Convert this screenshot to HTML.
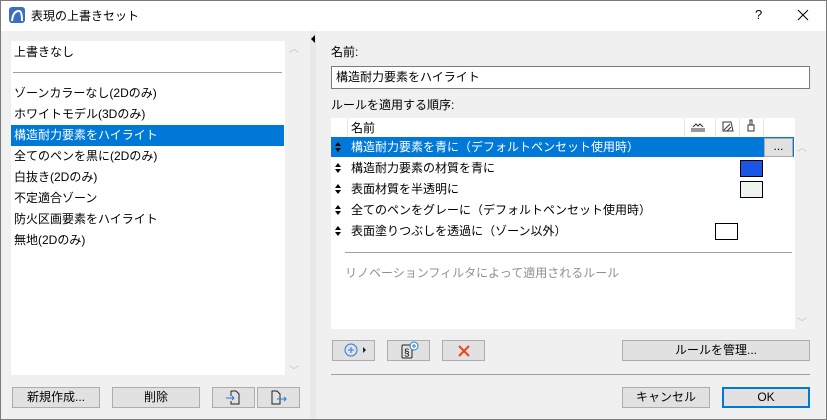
<!DOCTYPE html>
<html><head><meta charset="utf-8"><style>
*{box-sizing:border-box;margin:0;padding:0}
body{width:827px;height:420px;overflow:hidden;background:#f0f0f0;font-family:"Liberation Sans","Noto Sans CJK JP",sans-serif;font-size:12px;color:#000;position:relative}
.a{position:absolute}
.btn{position:absolute;background:#e1e1e1;border:1px solid #adadad;text-align:center;line-height:18px;height:21px}
.t{position:absolute;white-space:nowrap;line-height:16px}
.ar{position:absolute;left:335px}
</style></head><body>
<div class="a" style="left:0;top:0;width:827px;height:420px;border:1px solid #7a7a7a;z-index:9;pointer-events:none"></div>
<div class="a" style="left:0;top:0;width:827px;height:31px;background:#fff"></div>
<div class="a" style="left:9px;top:7px;width:16px;height:16px;background:#3c6fc0;border-radius:3px"><svg width="16" height="16"><path d="M3 14 Q4 4 10 4 Q13 4 13 14" fill="none" stroke="#fff" stroke-width="2"/></svg></div>
<div class="t" style="left:31px;top:8px">表現の上書きセット</div>
<div class="t" style="left:755px;top:7px;font-size:13px">?</div>
<svg class="a" style="left:797px;top:9px" width="12" height="12"><path d="M1 1L11 11M11 1L1 11" stroke="#000" stroke-width="1"/></svg>

<div class="a" style="left:11px;top:41px;width:274px;height:334px;background:#fff"></div>
<div class="t" style="left:14px;top:44px">上書きなし</div>
<div class="a" style="left:13px;top:72px;width:269px;height:1px;background:#a0a0a0"></div>
<div class="t" style="left:14px;top:85px">ゾーンカラーなし(2Dのみ)</div>
<div class="t" style="left:14px;top:106px">ホワイトモデル(3Dのみ)</div>
<div class="a" style="left:11px;top:125px;width:273px;height:21px;background:#0078d7"></div>
<div class="t" style="left:14px;top:127px;color:#fff">構造耐力要素をハイライト</div>
<div class="t" style="left:14px;top:148px">全てのペンを黒に(2Dのみ)</div>
<div class="t" style="left:14px;top:169px">白抜き(2Dのみ)</div>
<div class="t" style="left:14px;top:190px">不定適合ゾーン</div>
<div class="t" style="left:14px;top:211px">防火区画要素をハイライト</div>
<div class="t" style="left:14px;top:232px">無地(2Dのみ)</div>
<div class="t" style="left:289px;top:42px;color:#c0c0c0;font-size:10px">︿</div>
<div class="t" style="left:289px;top:364px;color:#c0c0c0;font-size:10px">﹀</div>
<div class="btn" style="left:12px;top:387px;width:88px">新規作成...</div>
<div class="btn" style="left:112px;top:387px;width:88px">削除</div>
<div class="btn" style="left:212px;top:387px;width:43px"><svg width="20" height="18"><path d="M7 3h5l3 3v10H7v-3M7 8v-5" fill="none" stroke="#222"/><path d="M2 10h8M8 8l2 2-2 2" fill="none" stroke="#1e7be0"/></svg></div>
<div class="btn" style="left:257px;top:387px;width:43px"><svg width="22" height="18"><path d="M4 3h5l3 3v10H4z" fill="none" stroke="#222"/><path d="M9 11h9M16 9l2 2-2 2" fill="none" stroke="#1e7be0"/></svg></div>
<div class="a" style="left:310px;top:31px;width:6px;height:389px;background:#e8e8e8"></div>
<div class="a" style="left:311px;top:35px;width:0;height:0;border-top:4px solid transparent;border-bottom:4px solid transparent;border-right:4px solid #000"></div>

<div class="t" style="left:331px;top:44px">名前:</div>
<div class="a" style="left:331px;top:66px;width:479px;height:23px;background:#fff;border:1px solid #7a7a7a"></div>
<div class="t" style="left:336px;top:69px">構造耐力要素をハイライト</div>
<div class="t" style="left:331px;top:97px">ルールを適用する順序:</div>
<div class="a" style="left:331px;top:118px;width:464px;height:211px;background:#fff"></div>
<div class="a" style="left:347px;top:118px;width:1px;height:18px;background:#e5e5e5"></div>
<div class="a" style="left:684px;top:118px;width:1px;height:18px;background:#e5e5e5"></div>
<div class="a" style="left:715px;top:118px;width:1px;height:18px;background:#e5e5e5"></div>
<div class="a" style="left:739px;top:118px;width:1px;height:18px;background:#e5e5e5"></div>
<div class="a" style="left:763px;top:118px;width:1px;height:18px;background:#e5e5e5"></div>
<div class="t" style="left:351px;top:120px">名前</div>
<svg class="a" style="left:690px;top:121px" width="16" height="12"><path d="M1 10h14M1 8h14M3 6l3-3 2 2 2-2 3 3" fill="none" stroke="#333"/></svg>
<svg class="a" style="left:721px;top:120px" width="14" height="13"><path d="M2 11h10l-2-9H2zM3 10l6-6M6 11l4-4" fill="none" stroke="#333"/></svg>
<svg class="a" style="left:746px;top:119px" width="10" height="14"><path d="M4 1h2v5H4zM2 6h6v6H2z" fill="none" stroke="#333"/></svg>
<div class="a" style="left:331px;top:137px;width:463px;height:20px;background:#0078d7"></div>
<div class="btn" style="left:764px;top:138px;width:29px;height:19px;line-height:14px;background:#e1e1e1">...</div>
<svg class="ar" style="top:142px" width="6" height="10"><path d="M0 4L3 0L6 4zM0 6L3 10L6 6z" fill="#000"/></svg>
<div class="t" style="left:351px;top:139px;color:#fff">構造耐力要素を青に（デフォルトペンセット使用時）</div>
<svg class="ar" style="top:163px" width="6" height="10"><path d="M0 4L3 0L6 4zM0 6L3 10L6 6z" fill="#000"/></svg>
<div class="t" style="left:351px;top:160px">構造耐力要素の材質を青に</div>
<div class="a" style="left:740px;top:160px;width:23px;height:17px;background:#1a55e6;border:1px solid #000"></div>
<svg class="ar" style="top:184px" width="6" height="10"><path d="M0 4L3 0L6 4zM0 6L3 10L6 6z" fill="#000"/></svg>
<div class="t" style="left:351px;top:181px">表面材質を半透明に</div>
<div class="a" style="left:740px;top:181px;width:23px;height:17px;background:#eef4ef;border:1px solid #000"></div>
<svg class="ar" style="top:205px" width="6" height="10"><path d="M0 4L3 0L6 4zM0 6L3 10L6 6z" fill="#000"/></svg>
<div class="t" style="left:351px;top:202px">全てのペンをグレーに（デフォルトペンセット使用時）</div>
<svg class="ar" style="top:226px" width="6" height="10"><path d="M0 4L3 0L6 4zM0 6L3 10L6 6z" fill="#000"/></svg>
<div class="t" style="left:351px;top:223px">表面塗りつぶしを透過に（ゾーン以外）</div>
<div class="a" style="left:715px;top:223px;width:23px;height:17px;background:#fff;border:1px solid #000"></div>
<div class="a" style="left:345px;top:252px;width:447px;height:1px;background:#a0a0a0"></div>
<div class="t" style="left:345px;top:265px;color:#909090">リノベーションフィルタによって適用されるルール</div>
<div class="t" style="left:797px;top:141px;color:#c0c0c0;font-size:10px">︿</div>
<div class="t" style="left:797px;top:316px;color:#c0c0c0;font-size:10px">﹀</div>
<div class="btn" style="left:332px;top:340px;width:43px"><svg width="30" height="18"><circle cx="12" cy="9" r="6" fill="none" stroke="#1e7be0"/><path d="M12 6v6M9 9h6" stroke="#1e7be0"/><path d="M24 6l3 3-3 3z" fill="#222"/></svg></div>
<div class="btn" style="left:387px;top:340px;width:43px"><svg width="24" height="18"><rect x="5" y="4" width="10" height="13" rx="1" fill="none" stroke="#222"/><text x="7" y="15" font-size="10" font-family="Liberation Sans">§</text><circle cx="17" cy="5" r="4" fill="#fff" stroke="#1e7be0"/><path d="M17 3v4M15 5h4" stroke="#1e7be0"/></svg></div>
<div class="btn" style="left:442px;top:340px;width:43px"><svg width="14" height="14" style="margin-top:3px"><path d="M2 2L12 12M12 2L2 12" stroke="#f04020" stroke-width="2"/></svg></div>
<div class="btn" style="left:622px;top:340px;width:188px">ルールを管理...</div>
<div class="a" style="left:331px;top:374px;width:479px;height:1px;background:#a0a0a0"></div>
<div class="btn" style="left:622px;top:387px;width:88px">キャンセル</div>
<div class="btn" style="left:722px;top:387px;width:88px;border:2px solid #0078d7;line-height:16px">OK</div>
</body></html>
